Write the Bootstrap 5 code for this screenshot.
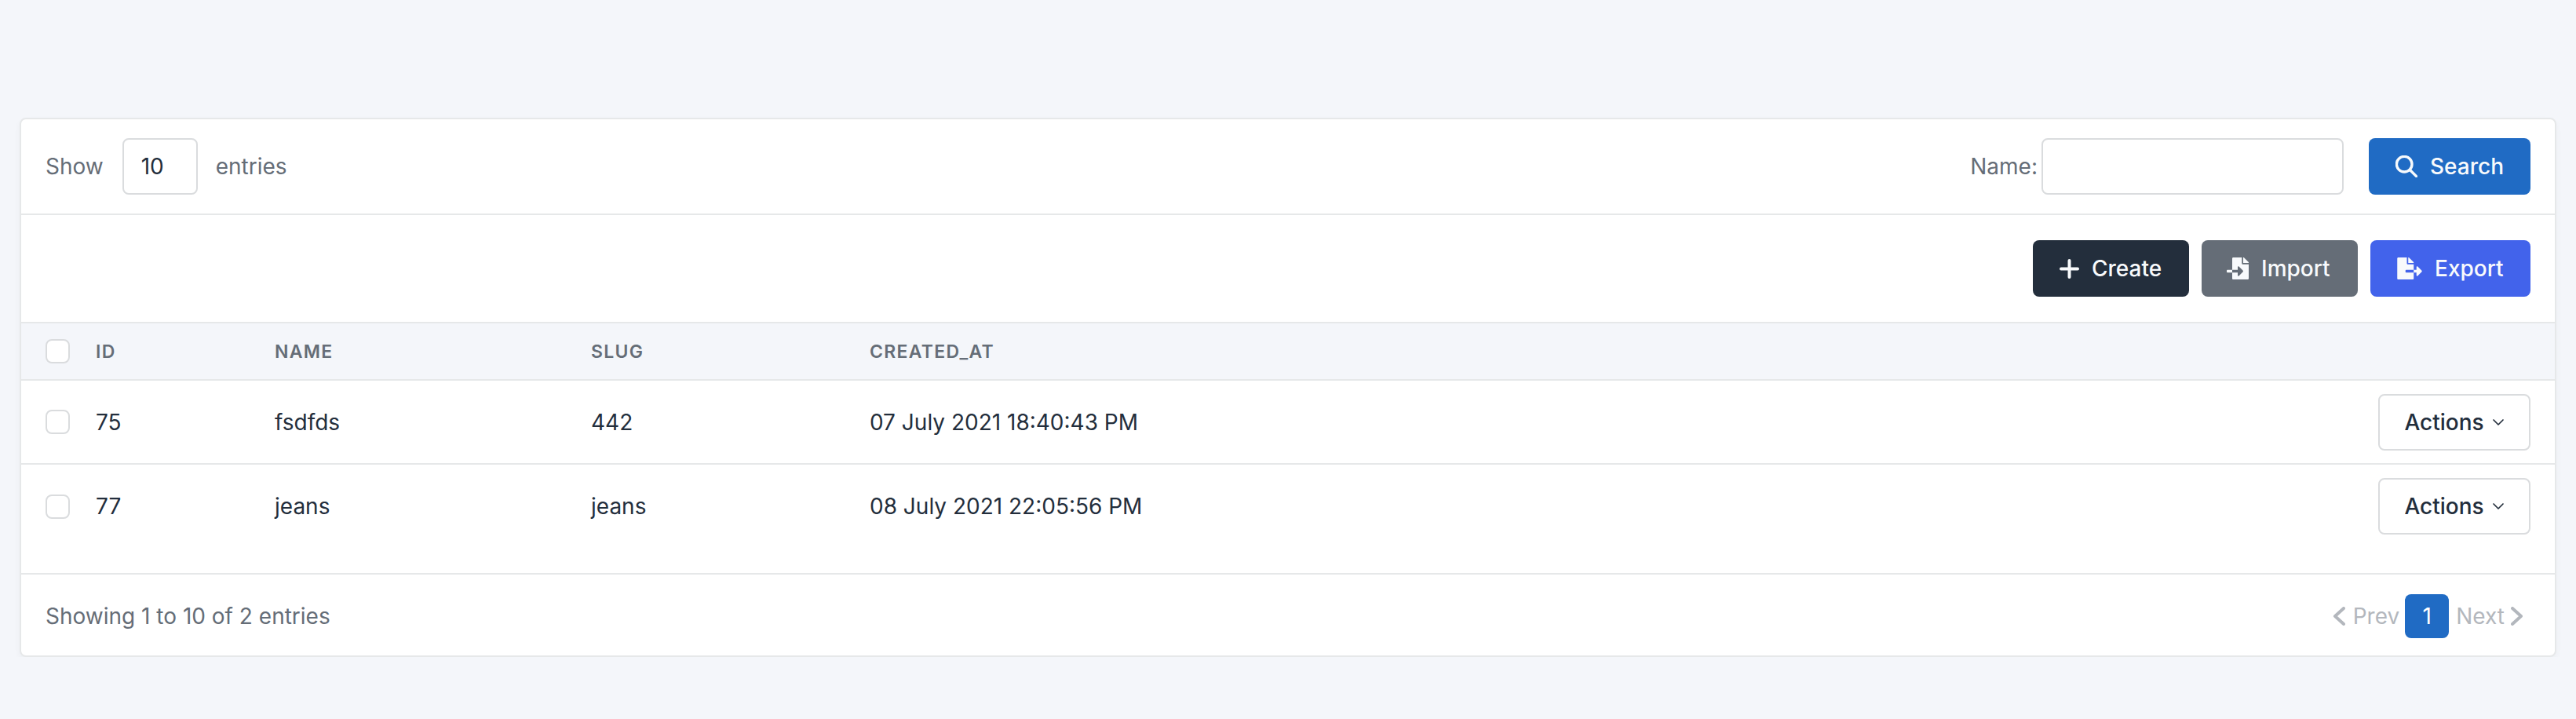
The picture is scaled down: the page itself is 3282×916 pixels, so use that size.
<!DOCTYPE html>
<html lang="en">
<head>
<meta charset="utf-8">
<title>Entries</title>
<link href="https://cdn.jsdelivr.net/npm/bootstrap@5.3.0/dist/css/bootstrap.min.css" rel="stylesheet">
<style>
body{background:#f4f6fa;font-family:Inter,"Liberation Sans",sans-serif;font-size:28px;color:#232e3c;line-height:40px;padding:150px 25px 0;}
.panel{background:#fff;border:2px solid #e6e8e9;border-radius:8px;box-shadow:0 4px 8px rgba(35,46,60,.04);margin:0;overflow:hidden;}
.bar-top{padding:24px 31px 24px 31px;border-bottom:2px solid #e6e8e9;color:#656d77;}
.bar-tools{padding:32px 31px 32px;}
.fld{height:72px;border:2px solid #dadcde;border-radius:8px;background:#fff;color:#232e3c;font-size:28px;padding:0 22px;}
.fld-num{width:96px;margin:0 23px 0 24px;}
.fld-name{width:385px;margin:0 32px 0 5px;}
.act{height:72px;border:2px solid transparent;border-radius:8px;color:#f8fafc;font-size:28px;font-weight:500;line-height:40px;padding:0 32px;display:inline-flex;align-items:center;gap:16px;}
.act svg{display:block;flex:none;}
.act-blue{background:#206bc4;width:206px;}
.act-dark{background:#232e3c;width:199px;}
.act-grey{background:#656d77;width:199px;padding-left:30px;}
.act-indigo{background:#4263eb;width:204px;}
.grid-tbl{margin:0;width:100%;border-collapse:collapse;table-layout:fixed;--bs-table-bg:transparent;}
.grid-tbl th{background:#f4f6fa;border-top:2px solid #e6e8e9;border-bottom:2px solid #e6e8e9;color:#656d77;font-size:23px;font-weight:600;letter-spacing:1.3px;text-transform:uppercase;height:73px;padding:0;vertical-align:middle;}
.grid-tbl td{border-bottom:2px solid #e6e8e9;height:107px;padding:0;vertical-align:middle;color:#232e3c;font-size:28px;}
.grid-tbl tbody tr:last-child td{border-bottom:0;}
.c-chk{width:95px;padding-left:31px !important;}
.c-id{width:228px;}
.c-name{width:403px;}
.c-slug{width:355px;}
.c-end{width:auto;text-align:right;padding-right:31px !important;}
.tick{display:block;width:31px;height:31px;border:2px solid #dadcde;border-radius:8px;background:#fff;margin:0;}
.grid-foot{height:34px;border-bottom:2px solid #e6e8e9;}
.row-act{height:72px;width:194px;border:2px solid #dadcde;border-radius:8px;background:#fff;color:#232e3c;font-size:28px;font-weight:500;padding:0;display:inline-flex;align-items:center;justify-content:center;gap:10px;}
.bar-foot{padding:24px 31px 22px 31px;color:#656d77;height:103px;}
.pg-off{color:#b3b7bd;display:inline-flex;align-items:center;gap:10px;}
.pg-next{gap:8px;}
.pg-on{width:56px;height:56px;background:#206bc4;color:#fff;border-radius:8px;display:flex;align-items:center;justify-content:center;margin:0 9px 0 7px;}
.pager{margin-right:9px;}
</style>
</head>
<body>
<div class="panel">
  <div class="bar-top d-flex align-items-center">
    <span>Show</span>
    <input class="fld fld-num" type="text" value="10" aria-label="Entries">
    <span>entries</span>
    <span class="ms-auto">Name:</span>
    <input class="fld fld-name" type="text" aria-label="Name">
    <button class="btn act act-blue" type="button">
      <svg width="28" height="28" viewBox="2 2 20 20" fill="none" stroke="currentColor" stroke-width="2.4" stroke-linecap="round" stroke-linejoin="round"><circle cx="10" cy="10" r="7"/><path d="M21 21l-6-6"/></svg>
      Search
    </button>
  </div>
  <div class="bar-tools d-flex justify-content-end gap-3">
    <button class="btn act act-dark" type="button">
      <svg width="25" height="25" viewBox="0 0 25 25" fill="none" stroke="currentColor" stroke-width="4" stroke-linecap="round"><path d="M12.5 2v21M2 12.5h21"/></svg>
      Create
    </button>
    <button class="btn act act-grey" type="button">
      <svg width="28" height="28" viewBox="0 0 512 512" fill="currentColor"><path d="M16 288c-8.800 0-16 7.200-16 16v32c0 8.800 7.200 16 16 16h112v-64zm489-183L407.100 7c-4.500-4.500-10.600-7-17-7H384v128h128v-6.100c0-6.300-2.500-12.400-7-16.900zm-153 31V0H152c-13.300 0-24 10.700-24 24v264h128v-65.200c0-14.300 17.300-21.400 27.400-11.300L379 308c6.600 6.700 6.600 17.400 0 24l-95.700 96.400c-10.100 10.100-27.400 3-27.400-11.300V352H128v136c0 13.300 10.700 24 24 24h336c13.300 0 24-10.700 24-24V160H376c-13.200 0-24-10.800-24-24z"/></svg>
      Import
    </button>
    <button class="btn act act-indigo" type="button">
      <svg width="32" height="28" viewBox="0 0 576 512" fill="currentColor"><path d="M384 121.900c0-6.300-2.500-12.400-7-16.900L279.100 7c-4.500-4.500-10.600-7-17-7H256v128h128zM571 308l-95.700-96.400c-10.100-10.100-27.400-3-27.400 11.300V288h-64v64h64v65.200c0 14.300 17.300 21.400 27.400 11.300L571 332c6.600-6.600 6.600-17.400 0-24zm-379 28v-32c0-8.800 7.200-16 16-16h176V160H248c-13.200 0-24-10.800-24-24V0H24C10.700 0 0 10.700 0 24v464c0 13.300 10.700 24 24 24h336c13.300 0 24-10.700 24-24V352H208c-8.800 0-16-7.200-16-16z"/></svg>
      Export
    </button>
  </div>
  <table class="table grid-tbl">
    <thead>
      <tr>
        <th class="c-chk"><span class="tick"></span></th>
        <th class="c-id">ID</th>
        <th class="c-name">Name</th>
        <th class="c-slug">Slug</th>
        <th>Created_at</th>
        <th class="c-end"></th>
      </tr>
    </thead>
    <tbody>
      <tr>
        <td class="c-chk"><span class="tick"></span></td>
        <td>75</td><td>fsdfds</td><td>442</td><td>07 July 2021 18:40:43 PM</td>
        <td class="c-end"><button class="btn row-act" type="button">Actions <svg width="16" height="10" viewBox="0 0 16 10" fill="none" stroke="currentColor" stroke-width="1.700" stroke-linecap="round" stroke-linejoin="round"><path d="M2 2l6 6 6-6"/></svg></button></td>
      </tr>
      <tr>
        <td class="c-chk"><span class="tick"></span></td>
        <td>77</td><td>jeans</td><td>jeans</td><td>08 July 2021 22:05:56 PM</td>
        <td class="c-end"><button class="btn row-act" type="button">Actions <svg width="16" height="10" viewBox="0 0 16 10" fill="none" stroke="currentColor" stroke-width="1.700" stroke-linecap="round" stroke-linejoin="round"><path d="M2 2l6 6 6-6"/></svg></button></td>
      </tr>
    </tbody>
  </table>
  <div class="grid-foot"></div>
  <div class="bar-foot d-flex align-items-center justify-content-between">
    <span>Showing 1 to 10 of 2 entries</span>
    <div class="pager d-flex align-items-center">
      <span class="pg-off"><svg width="16" height="24" viewBox="0 0 16 24" fill="none" stroke="currentColor" stroke-width="4" stroke-linecap="round" stroke-linejoin="round"><path d="M14 2L3 12l11 10"/></svg>Prev</span>
      <span class="pg-on">1</span>
      <span class="pg-off pg-next">Next<svg width="16" height="24" viewBox="0 0 16 24" fill="none" stroke="currentColor" stroke-width="4" stroke-linecap="round" stroke-linejoin="round"><path d="M2 2l11 10L2 22"/></svg></span>
    </div>
  </div>
</div>
<script src="https://cdn.jsdelivr.net/npm/bootstrap@5.3.0/dist/js/bootstrap.bundle.min.js"></script>
</body>
</html>
